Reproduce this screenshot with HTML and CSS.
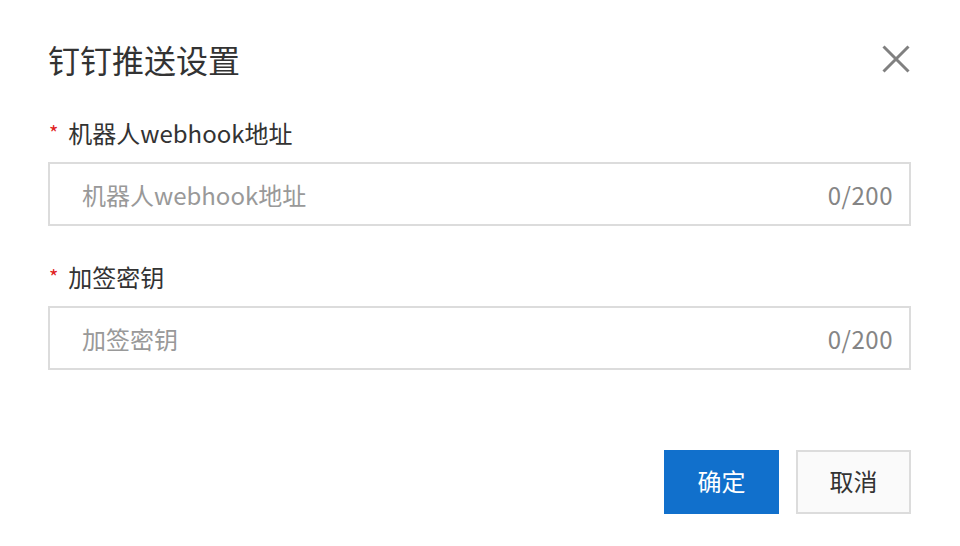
FILE: index.html
```html
<!DOCTYPE html>
<html lang="zh-CN">
<head>
<meta charset="utf-8">
<title>钉钉推送设置</title>
<link rel="stylesheet" href="styles.css">
</head>
<body>
<div class="dialog">
  <div class="header">
    <h1 class="title">钉钉推送设置</h1>
    <button class="close" aria-label="关闭">
      <svg width="28" height="28" viewBox="0 0 28 28"><path d="M1.5 1.5 L26.5 26.5 M26.5 1.5 L1.5 26.5" stroke="#808080" stroke-width="3" fill="none"/></svg>
    </button>
  </div>
  <div class="field first">
    <label class="label"><span class="req">*</span>机器人webhook地址</label>
    <div class="input">
      <span class="placeholder">机器人webhook地址</span>
      <span class="count">0/200</span>
    </div>
  </div>
  <div class="field">
    <label class="label"><span class="req">*</span>加签密钥</label>
    <div class="input">
      <span class="placeholder">加签密钥</span>
      <span class="count">0/200</span>
    </div>
  </div>
  <div class="footer">
    <button class="btn primary">确定</button>
    <button class="btn default">取消</button>
  </div>
</div>
</body>
</html>
```

FILE: styles.css
```css
* { box-sizing: border-box; }
html, body {
  margin: 0;
  padding: 0;
  background: #ffffff;
}
body {
  font-family: "Noto Sans CJK SC", "Noto Sans", sans-serif;
  color: #333333;
}
.dialog {
  width: 960px;
  height: 546px;
  padding: 39px 49px 0 48px;
}
.header {
  display: flex;
  justify-content: space-between;
  align-items: center;
  height: 40px;
}
.title {
  margin: 0;
  font-size: 32px;
  font-weight: 400;
  line-height: 40px;
  color: #333333;
}
.close {
  border: 0;
  background: transparent;
  padding: 0;
  margin-right: 1px;
  width: 28px;
  height: 28px;
  display: flex;
}
.field { margin-top: 35px; }
.field.first { margin-top: 38px; }
.label {
  display: flex;
  align-items: center;
  font-size: 24px;
  line-height: 32px;
  height: 32px;
  color: #333333;
}
.req {
  color: #e02020;
  font-size: 20px;
  margin-right: 10px;
  margin-left: 1px;
}
.input {
  margin-top: 13px;
  height: 64px;
  border: 2px solid #dcdcdc;
  display: flex;
  align-items: center;
  justify-content: space-between;
  padding: 0 16px 0 32px;
  font-size: 24px;
}
.placeholder { color: #999999; }
.count { color: #858585; letter-spacing: 0.5px; }
.footer {
  margin-top: 80px;
  display: flex;
  justify-content: flex-end;
  gap: 17px;
}
.btn {
  width: 115px;
  height: 64px;
  font-family: inherit;
  font-size: 24px;
  padding: 0 0 3px 0;
  cursor: pointer;
}
.btn.primary {
  background: #1170cc;
  color: #ffffff;
  border: 0;
}
.btn.default {
  background: #fafafa;
  color: #333333;
  border: 2px solid #dcdcdc;
}
```
